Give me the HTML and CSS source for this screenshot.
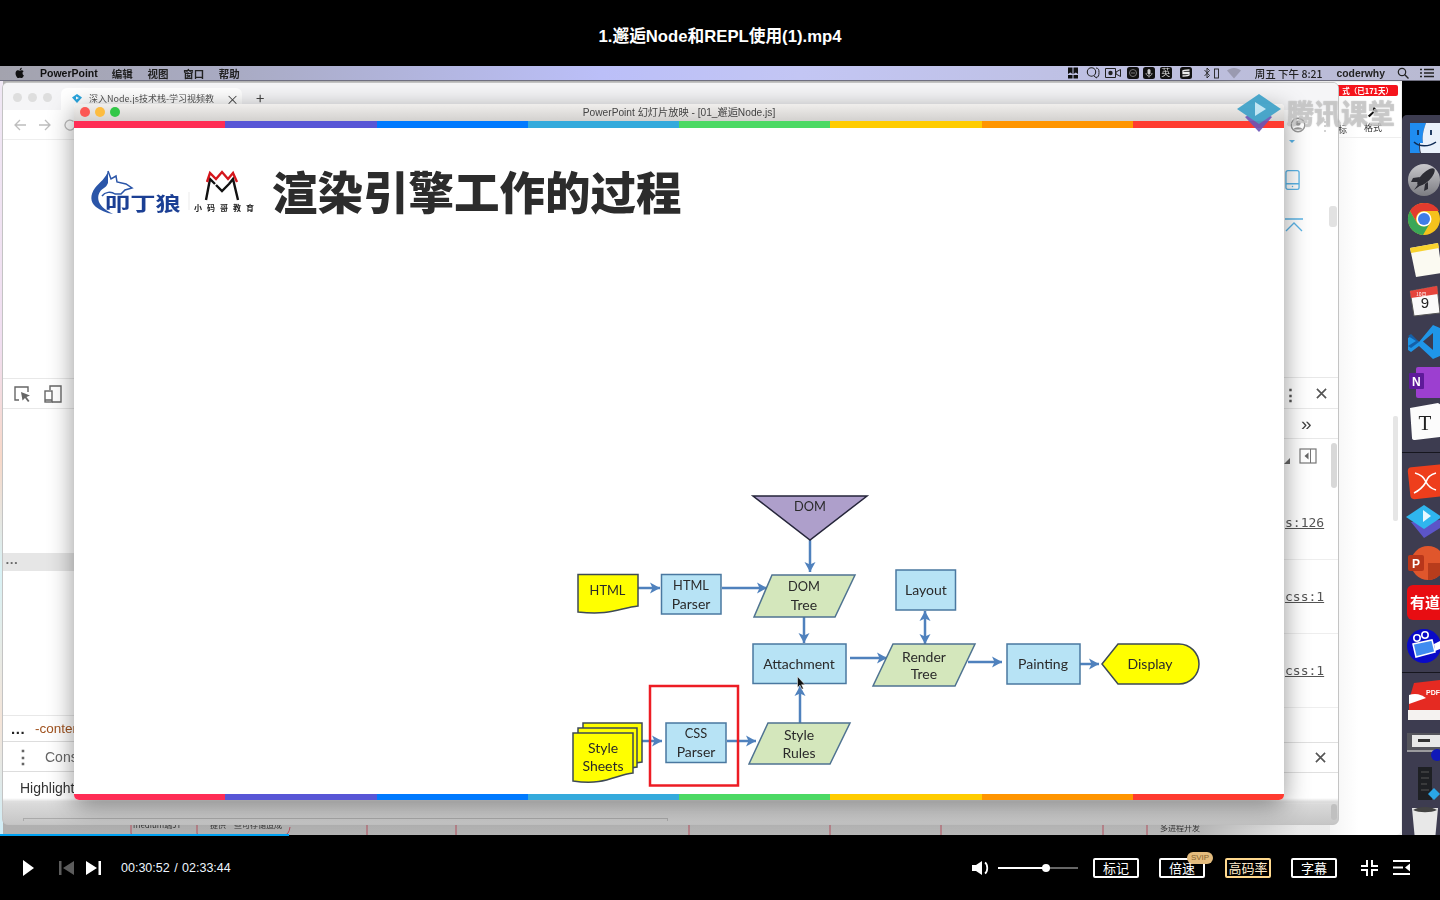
FILE: index.html
```html
<!DOCTYPE html>
<html lang="zh-CN">
<head>
<meta charset="utf-8">
<title>1.邂逅Node和REPL使用(1).mp4</title>
<link rel="stylesheet" href="styles.css">
</head>
<body>
<div class="player">
  <header class="video-title">1.邂逅Node和REPL使用(1).mp4</header>

  <main class="screen">
    <nav class="menubar">
      <svg class="apple" viewBox="0 0 24 24"><path d="M17.05 12.54c-.03-2.6 2.12-3.85 2.22-3.91-1.21-1.77-3.09-2.01-3.76-2.04-1.6-.16-3.12.94-3.94.94-.81 0-2.07-.92-3.4-.89-1.75.03-3.36 1.02-4.26 2.58-1.82 3.15-.46 7.82 1.3 10.38.87 1.25 1.9 2.65 3.25 2.6 1.31-.05 1.8-.84 3.38-.84 1.57 0 2.02.84 3.4.82 1.4-.03 2.29-1.27 3.15-2.53.99-1.45 1.4-2.86 1.42-2.93-.03-.01-2.73-1.05-2.76-4.18zM14.47 4.9c.72-.87 1.2-2.08 1.07-3.28-1.03.04-2.28.69-3.02 1.55-.66.77-1.24 2-1.09 3.18 1.15.09 2.32-.58 3.04-1.45z"/></svg>
      <span class="menu-app">PowerPoint</span>
      <span class="menu-item">编辑</span>
      <span class="menu-item">视图</span>
      <span class="menu-item">窗口</span>
      <span class="menu-item">帮助</span>
      <div class="status">
        <svg class="st st-mark" viewBox="0 0 12 12"><path d="M1 .5h4.500v6.500L3.300 5.500 1 7zM6.500 .5H11V7L8.800 5.500 6.500 7zM1 8h4.500v3.500H1zM6.500 8H11v3.500H6.500z" fill="#111"/></svg>
        <svg class="st st-q" viewBox="0 0 14 12"><circle cx="5.500" cy="5" r="4.200" fill="none" stroke="#222" stroke-width="1.100"/><path d="M8 9l2.500 2M10 1c2.500 0 3 1.800 3 4.500s-.5 5-3 5" fill="none" stroke="#222" stroke-width="1"/></svg>
        <svg class="st st-cam" viewBox="0 0 16 12"><path d="M.5 1.500h10v9H.5zM11 5l4.500-2.500v7L11 7z" fill="none" stroke="#222" stroke-width="1"/><circle cx="5.500" cy="6" r="2.200" fill="#222"/></svg>
        <svg class="st st-dark" viewBox="0 0 12 12"><rect width="12" height="12" rx="2.500" fill="#111"/><circle cx="6" cy="6" r="3.500" fill="none" stroke="#777"/><path d="M4 6h4" stroke="#777"/></svg>
        <svg class="st st-mic" viewBox="0 0 12 12"><rect width="12" height="12" rx="2.500" fill="#111"/><rect x="4.500" y="2" width="3" height="5.500" rx="1.500" fill="#ccc"/><path d="M3 6c0 4 6 4 6 0M6 9v1.500" fill="none" stroke="#ccc" stroke-width=".8"/></svg>
        <span class="st-ime">英</span>
        <svg class="st st-s" viewBox="0 0 12 12"><rect width="12" height="12" rx="2.500" fill="#111"/><path d="M2.500 4.500C3 3 9.500 3 9.500 3M9.500 7.500C9 9 2.500 9 2.500 9M3 5.500h6v1H3z" fill="none" stroke="#eee" stroke-width="1.300"/></svg>
        <svg class="st st-bt" viewBox="0 0 18 12"><path d="M1.500 3l5 5.500L4 11V1l2.500 2.500-5 5.500" fill="none" stroke="#222" stroke-width=".9"/><rect x="11.500" y="2" width="4" height="9" fill="none" stroke="#222" stroke-width=".9"/></svg>
        <svg class="st st-wifi" viewBox="0 0 14 12"><path d="M0 3.500C4 0 10 0 14 3.500L7 11.500z" fill="#9a9ab0"/></svg>
        <span class="st-clock">周五 下午 8:21</span>
        <span class="st-user">coderwhy</span>
        <svg class="st st-search" viewBox="0 0 12 12"><circle cx="5" cy="5" r="3.700" fill="none" stroke="#222" stroke-width="1.200"/><path d="M7.800 7.800L11.500 11.500" stroke="#222" stroke-width="1.300"/></svg>
        <svg class="st st-list" viewBox="0 0 14 12"><path d="M4 2.500h10M4 6h10M4 9.500h10" stroke="#222" stroke-width="1.300"/><path d="M0 2.500h2M0 6h2M0 9.500h2" stroke="#222" stroke-width="1.300"/></svg>
      </div>
    </nav>

    <div class="wallpaper"><span class="wall-strip"></span></div>

    <svg class="behind-strip" viewBox="0 0 1402 10">
      <path d="M131 0v8q0 2 2 2h62M197 0v8q0 2 2 2h85q5 0 6-8M367 0v10M456 0v10M689 0v10M830 0v10M941 0v10M1103 0v10M1147 0v10" fill="none" stroke="#b4505f"/>
      <text x="133" y="3" class="strip-text">medium端JT</text>
      <text x="210" y="3" class="strip-text">提供一些可存储造成</text>
      <text x="1160" y="6" class="strip-text">多进程开发</text>
    </svg>

    <aside class="backapp">
      <div class="trial-badge">式（已171天）</div>
      <div class="backapp-tool">
        <span class="cut-label">标</span>
        <div class="format-tool">
          <svg class="brush" viewBox="0 0 14 14"><path d="M8 1l5 5-3 1.500-3.500-3.500zM7 6l1.500 1.500L3 13l-2-1.500z" fill="#111"/></svg>
          <span>格式</span>
        </div>
      </div>
      <span class="backapp-scroll"></span>
    </aside>

    <section class="browser">
      <div class="tabstrip">
        <div class="lights-off"><i></i><i></i><i></i></div>
        <div class="tab">
          <svg class="favicon" viewBox="0 0 12 12"><path d="M1 4.500L6 1l5 3.500L6 10z" fill="#2aa6df"/><path d="M5 3.500l3 1.500-3 1.500z" fill="#fff"/></svg>
          <span class="tab-title">深入Node.js技术栈-学习视频教</span>
          <span class="tab-x">×</span>
        </div>
        <span class="tab-plus">+</span>
      </div>
      <div class="browser-body">
        <div class="pane pane-left">
          <div class="row nav-row">
            <svg class="nav-ic" viewBox="0 0 14 14"><path d="M13 7H2M7 2L2 7l5 5" fill="none" stroke="#bdbdbd" stroke-width="1.300"/></svg>
            <svg class="nav-ic" viewBox="0 0 14 14"><path d="M1 7h11M7 2l5 5-5 5" fill="none" stroke="#bdbdbd" stroke-width="1.300"/></svg>
            <svg class="nav-ic" viewBox="0 0 14 14"><path d="M12 7a5 5 0 1 1-1.500-3.500" fill="none" stroke="#bdbdbd" stroke-width="1.300"/></svg>
          </div>
          <div class="fill"></div>
          <div class="row tool-row">
            <svg class="tool-ic" viewBox="0 0 18 18"><path d="M6 15H2V2h13v5" fill="none" stroke="#666" stroke-width="1.400"/><path d="M8 7l9 3.500-3.500 1.500 3 4-1.500 1-3-4-2.500 2.500z" fill="#666"/></svg>
            <svg class="tool-ic" viewBox="0 0 18 18"><path d="M6 5V1h11v16H8" fill="none" stroke="#666" stroke-width="1.400"/><rect x="1" y="6" width="7" height="11" fill="none" stroke="#666" stroke-width="1.400"/><path d="M1 15h7" stroke="#666" stroke-width="1.400"/></svg>
          </div>
          <div class="blank-145"></div>
          <div class="row dots-band">•••</div>
          <div class="blank-144"></div>
          <div class="row css-row"><b>...</b><span class="css-prop">-content</span></div>
          <div class="row console-row"><span class="vdots">⋮</span><span>Console</span></div>
          <div class="row highlight-row">Highlight</div>
        </div>

        <div class="pane pane-right">
          <div class="row nav-row-r">
            <svg class="avatar" viewBox="0 0 16 16"><circle cx="8" cy="8" r="6.800" fill="none" stroke="#999" stroke-width="1.400"/><circle cx="8" cy="6.300" r="2.500" fill="#999"/><path d="M3.500 12.500c1-3 8-3 9 0" fill="#999"/></svg>
            <span class="kebab-faint">⋮</span>
          </div>
          <div class="fill right-icons">
            <span class="mini-arrow"></span>
            <svg class="tablet" viewBox="0 0 16 22"><rect x="1" y="1" width="14" height="20" rx="2" fill="none" stroke="#5bb5e8" stroke-width="1.400"/><path d="M1 15h14" stroke="#5bb5e8" stroke-width="1.400"/><circle cx="8" cy="18" r=".8" fill="#5bb5e8"/></svg>
            <svg class="up-top" viewBox="0 0 18 14"><path d="M0 1h18M1 13l8-8 8 8" fill="none" stroke="#5bb5e8" stroke-width="1.300"/></svg>
            <span class="scroll-a"></span>
          </div>
          <div class="row tool-row-r">
            <span class="kebab">⋮</span>
            <svg class="close" viewBox="0 0 12 12"><path d="M1 1l10 10M11 1L1 11" stroke="#555" stroke-width="1.800"/></svg>
          </div>
          <div class="row more-row"><span class="more">»</span></div>
          <div class="row panel-row">
            <span class="corner"></span>
            <svg class="panel-ic" viewBox="0 0 18 16"><rect x="1" y="1" width="16" height="14" fill="none" stroke="#777" stroke-width="1.200"/><path d="M11.500 1v14" stroke="#777"/><path d="M9.500 4.500v7L5.500 8z" fill="#666"/></svg>
            <span class="scroll-b"></span>
          </div>
          <div class="row src-row first-src"><u>s:126</u></div>
          <div class="row src-row"><u>css:1</u></div>
          <div class="row src-row"><u>css:1</u></div>
          <div class="blank-34"></div>
          <div class="row close-row">
            <svg class="close" viewBox="0 0 12 12"><path d="M1 1l10 10M11 1L1 11" stroke="#555" stroke-width="1.800"/></svg>
          </div>
          <div class="row blank-row"></div>
          <span class="scroll-c"></span>
        </div>
      </div>
      <span class="h-track"></span>
    </section>

    <section class="slide-window">
      <div class="slide-titlebar">
        <div class="lights"><i class="l-red"></i><i class="l-yellow"></i><i class="l-green"></i></div>
        <span class="slide-name">PowerPoint 幻灯片放映 - [01_邂逅Node.js]</span>
      </div>
      <div class="rainbow rainbow-top"><i class="c1"></i><i class="c2"></i><i class="c3"></i><i class="c4"></i><i class="c5"></i><i class="c6"></i><i class="c7"></i><i class="c8"></i></div>
      <div class="slide-body">
        <div class="slide-head">
          <svg class="logos" viewBox="90 168 165 48">
            <path d="M108 171c-2 7-8 11-13 17-5 7-5 14 1 19 4 3 10 6 17 7-6-3-12-7-14-12-2-6 0-11 5-14 2-1 3-3 4-5z" fill="#2a55a8"/>
            <path d="M108 171l3 8 5-3 1 6 9 2 6 4-7 2-4 4h-6c-4-3-10-2-13 2" fill="none" stroke="#2a55a8" stroke-width="1.500"/>
            <text x="0" y="0" class="logo-wolf" transform="translate(105 211) scale(1.330 1)">叩丁狼</text>
            <path d="M189 192v18" stroke="#ddd" stroke-width=".6"/>
            <path d="M206 200l4-21 5 5M216 185l6 6 7-7M229 184l4-5 5 21" fill="none" stroke="#111" stroke-width="2.400"/>
            <path d="M207 182l3-9 6 6 6-7 6 7 5-6 4 9" fill="none" stroke="#d5161c" stroke-width="2.400"/>
            <text x="194" y="211" class="logo-mini">小码哥教育</text>
          </svg>
          <h1 class="slide-title">渲染引擎工作的过程</h1>
        </div>

        <svg class="diagram" viewBox="74 128 1210 666">
          <defs>
            <marker id="ah" markerUnits="userSpaceOnUse" markerWidth="11" markerHeight="12" refX="10" refY="6" orient="auto-start-reverse">
              <path d="M0 .5L10 6 0 11.500 2.500 6z" fill="#4f81bd"/>
            </marker>
          </defs>
          <g class="arrows">
            <path d="M810 540V572" marker-end="url(#ah)"/>
            <path d="M638 588H660" marker-end="url(#ah)"/>
            <path d="M722 588H767" marker-end="url(#ah)"/>
            <path d="M804 617V643" marker-end="url(#ah)"/>
            <path d="M850 658H887" marker-end="url(#ah)"/>
            <path d="M925 611V644" marker-start="url(#ah)" marker-end="url(#ah)"/>
            <path d="M968 662H1002" marker-end="url(#ah)"/>
            <path d="M1080 664H1099" marker-end="url(#ah)"/>
            <path d="M642 741H662" marker-end="url(#ah)"/>
            <path d="M727 741H756" marker-end="url(#ah)"/>
            <path d="M800 723V686" marker-end="url(#ah)"/>
          </g>
          <path class="tri" d="M753 496H867L810 540z"/>
          <path class="doc" d="M578 574.500H638V606C620 608 610 616 578 612z"/>
          <rect class="box" x="661.500" y="574.500" width="59.500" height="39.500"/>
          <path class="para" d="M772 575H855L835 617H754z"/>
          <rect class="box" x="753" y="644" width="93" height="39.500"/>
          <rect class="box" x="896" y="570" width="59.500" height="40"/>
          <path class="para" d="M893 644H975L955 686H873z"/>
          <rect class="box" x="1007" y="644" width="73" height="40"/>
          <path class="doc" d="M1102 664L1118 644H1179A20 20 0 0 1 1179 684H1118z"/>
          <path class="doc" d="M583 723H642V762L628 764H583z"/>
          <path class="doc" d="M578 728H637V767L623 769H578z"/>
          <path class="doc" d="M573 733H633V773C615 775 605 786 573 781z"/>
          <rect class="box" x="666" y="723" width="60" height="39.500"/>
          <path class="para" d="M768 723H850L830 764H749z"/>
          <rect class="redmark" x="650" y="686" width="88" height="99.500"/>
          <g class="labels">
            <text x="810" y="506" class="caps">DOM</text>
            <text x="607.500" y="590" class="caps">HTML</text>
            <text x="691" y="585" class="caps">HTML</text><text x="691" y="603">Parser</text>
            <text x="804" y="586" class="caps">DOM</text><text x="804" y="604">Tree</text>
            <text x="799" y="663">Attachment</text>
            <text x="926" y="589">Layout</text>
            <text x="924" y="656">Render</text><text x="924" y="673">Tree</text>
            <text x="1043" y="663">Painting</text>
            <text x="1150" y="663">Display</text>
            <text x="603" y="747">Style</text><text x="603" y="765">Sheets</text>
            <text x="696" y="733" class="caps">CSS</text><text x="696" y="751">Parser</text>
            <text x="799" y="734">Style</text><text x="799" y="752">Rules</text>
          </g>
          <path d="M797.500 676.500v11l2.500-2.200 1.800 4 1.600-.8-1.800-3.800h3.400z" fill="#111" stroke="#fff" stroke-width=".5"/>
        </svg>
      </div>
      <div class="rainbow rainbow-bottom"><i class="c1"></i><i class="c2"></i><i class="c3"></i><i class="c4"></i><i class="c5"></i><i class="c6"></i><i class="c7"></i><i class="c8"></i></div>
    </section>

    <div class="watermark">
      <svg class="wm-icon" viewBox="0 0 44 38"><path d="M8 23l14 15 13-15-13-8z" fill="#6b55b8"/><path d="M0 15L22 0l22 15-22 15z" fill="#3aa0c8"/><path d="M18 8l11 7-11 7z" fill="#bfe6f5"/></svg>
      <span class="wm-text">腾讯课堂</span>
    </div>

    <aside class="dock">
      <svg class="dock-art" viewBox="1402 115 38 720">
        <defs>
          <linearGradient id="rocketbg" x1="0" y1="0" x2="0" y2="1"><stop offset="0" stop-color="#c8c8cc"/><stop offset="1" stop-color="#7c7c82"/></linearGradient>
        </defs>
        <path d="M1410 123h16c-3 8-4 14-3 20h-4c0 4 0 7 1 10h-10z" fill="#1f8cf0"/>
        <path d="M1426 123h14v30h-19c-1-3-1-6-1-10h3c-1-6 0-12 3-20z" fill="#e9f1fb"/>
        <path d="M1414 142c5 5 15 5 22 0" fill="none" stroke="#0d2b55" stroke-width="1.500"/>
        <path d="M1418 130v5M1431 130v5" stroke="#0d2b55" stroke-width="1.800"/>

        <circle cx="1424" cy="180" r="16" fill="url(#rocketbg)"/>
        <ellipse cx="1426" cy="177" rx="4.500" ry="11.500" transform="rotate(45 1426 177)" fill="#2c2c34"/>
        <path d="M1420 177l-7 1-2 4 7 0zM1425 184l-1 7 4-2 0-7zM1419 183l-5 7 7-5z" fill="#2c2c34"/>

        <circle cx="1424" cy="219" r="16" fill="#f6c21c"/>
        <path d="M1424 203a16 16 0 0 0-14 8l7 12a8 8 0 0 1 7-12h15a16 16 0 0 0-15-8z" fill="#e33b2e"/>
        <path d="M1410 211a16 16 0 0 0 13 24l7-12a8 8 0 0 1-13 0z" fill="#3aa757"/>
        <circle cx="1424" cy="219" r="7.500" fill="#fff"/><circle cx="1424" cy="219" r="6" fill="#3f7de8"/>

        <path d="M1410 248l28-5 4 30-26 4z" fill="#fbfaf2"/>
        <path d="M1410 248l28-5 1 5-28 5z" fill="#f8d22e"/>

        <path d="M1410 291l27-5 3 27-26 3z" fill="#fafafa" stroke="#555"/>
        <path d="M1410 291l27-5 1 8-27 4z" fill="#e5443c"/>
        <text x="1425" y="308" class="dock-nine">9</text>
        <text x="1416" y="296" class="dock-cal">10月</text>

        <path d="M1433 325l7 3v28l-7 3-14-13-8 6-3-2v-12l3-2 8 6z" fill="#1f96e8"/>
        <path d="M1419 342l-8 6-3-2 8-5-8-5 3-2z" fill="#1560a8"/>
        <path d="M1433 333v17l-10-8.500z" fill="#3c3b4f"/>

        <rect x="1416" y="367" width="26" height="31" rx="2" fill="#9c3fd0"/>
        <rect x="1409" y="373" width="15" height="16" rx="1" fill="#5e1a9a"/>
        <text x="1412" y="386" class="dock-letter">N</text>

        <path d="M1410 408l28-5 3 2v32l-26 3q-3 0-3-2z" fill="#fcfcfc"/>
        <text x="1425" y="430" class="dock-t">T</text>

        <path d="M1402 452.500h38" stroke="#16161e"/>

        <rect x="1409" y="466" width="36" height="32" rx="4" fill="#ee3e1c" transform="rotate(-6 1425 482)"/>
        <path d="M1415 473q8 2 11 9-4 7-12 11M1436 473q-8 2-10 9 3 6 10 8" fill="none" stroke="#fff" stroke-width="1.600"/>

        <path d="M1411 522l13 16 16-10v-8z" fill="#5c55c8"/>
        <path d="M1406 517l18-12 18 12-18 12z" fill="#2fb6ee"/>
        <path d="M1423 510l8 6-8 6z" fill="#e8f8ff"/>

        <circle cx="1428" cy="563" r="17" fill="#e0562c"/>
        <path d="M1428 563h17a17 17 0 0 1-17 17z" fill="#b83c1c"/>
        <rect x="1408" y="555" width="16" height="16" rx="2" fill="#b8361a"/>
        <text x="1412" y="568" class="dock-letter">P</text>

        <rect x="1407" y="585" width="40" height="35" rx="6" fill="#e80d12"/>
        <text x="1410" y="608" class="dock-yd">有道</text>

        <circle cx="1424" cy="646" r="17" fill="#0a0ac8"/>
        <circle cx="1417" cy="638" r="3.200" fill="none" stroke="#fff" stroke-width="1.600"/>
        <circle cx="1425" cy="635" r="3.200" fill="none" stroke="#fff" stroke-width="1.600"/>
        <path d="M1413 644l19-4 3 12-19 5z" fill="#3f8cf0" stroke="#fff" stroke-width="1.500"/>
        <path d="M1434 644l6-3v8l-5 2z" fill="#fff"/>

        <path d="M1402 672.500h38" stroke="#16161e"/>

        <path d="M1409 700l5-17 26-3v30h-31z" fill="#e52a22"/>
        <path d="M1409 695a14 11 0 0 1 17 3l-17 6z" fill="#fff"/>
        <rect x="1408" y="710" width="32" height="10" fill="#f4f2f0"/>
        <text x="1426" y="695" class="dock-pdf">PDF</text>

        <rect x="1407" y="733" width="33" height="17" fill="#55555c"/>
        <rect x="1412" y="735" width="28" height="12" fill="#e8e8e8"/>
        <rect x="1418" y="739" width="12" height="3" fill="#333"/>
        <rect x="1407" y="750" width="33" height="2" fill="#9a9a9e"/>
        <circle cx="1437" cy="755" r="6" fill="#1018b8"/>

        <rect x="1418" y="767" width="14" height="33" fill="#1e2024"/>
        <path d="M1421 772h8M1421 778h8M1421 784h6M1421 790h8" stroke="#555"/>
        <path d="M1434 788l6 6-6 6-6-6z" fill="#2aa6e8"/>

        <path d="M1412 808h26l-2.500 27h-21z" fill="#e8e8e8"/>
        <path d="M1413 810c6-4 18-4 24 0-6 3-18 3-24 0z" fill="#444"/>
      </svg>
    </aside>
  </main>

  <footer class="controls">
    <span class="progress"></span>
    <svg class="ic-play" viewBox="0 0 11 16"><path d="M0 0l11 8-11 8z" fill="#fff"/></svg>
    <svg class="ic-prev" viewBox="0 0 15 14"><path d="M0 0h2.500v14H0zM15 0v14L4 7z" fill="#5c5c5c"/></svg>
    <svg class="ic-next" viewBox="0 0 15 14"><path d="M0 0l11 7-11 7zM12.500 0H15v14h-2.500z" fill="#fff"/></svg>
    <span class="time">00:30:52 / 02:33:44</span>
    <div class="ctl-right">
      <svg class="ic-vol" viewBox="0 0 19 14"><path d="M0 4h4l6-4v14l-6-4H0z" fill="#fff"/><path d="M13 1.500c3 2 3 9 0 11" fill="none" stroke="#fff" stroke-width="1.800"/></svg>
      <div class="volume"><span class="vol-fill"></span><span class="vol-knob"></span></div>
      <button class="btn">标记</button>
      <button class="btn btn-speed">倍速<span class="svip">SVIP</span></button>
      <button class="btn btn-gold">高码率</button>
      <button class="btn">字幕</button>
      <svg class="ic-exit" viewBox="0 0 17 16"><path d="M6 0v6H0M11 0v6h6M6 16v-6H0M11 16v-6h6" fill="none" stroke="#fff" stroke-width="2"/></svg>
      <svg class="ic-list" viewBox="0 0 17 15"><path d="M0 1h17M0 14h17M0 7.500h10" stroke="#fff" stroke-width="2"/><path d="M17 3.500v8l-5-4z" fill="#fff"/></svg>
    </div>
  </footer>
</div>
</body>
</html>
```

FILE: styles.css
```css
* { box-sizing: border-box; }
html, body { margin: 0; padding: 0; background: #000; }
body { font-family: "Noto Sans CJK SC", "Liberation Sans", sans-serif; }
i { display: block; font-style: normal; }

.player { width: 1440px; height: 900px; display: flex; flex-direction: column; overflow: hidden; }

.video-title {
  height: 66px; flex: none; padding-top: 3px;
  display: flex; align-items: center; justify-content: center;
  color: #fff; font-size: 16.700px; font-weight: 700;
  font-family: "Liberation Sans", "Noto Sans CJK SC", sans-serif;
}

.screen { position: relative; height: 769px; flex: none; background: #000; overflow: hidden; filter: blur(.35px); }

/* menu bar */
.menubar {
  position: relative; z-index: 5; height: 15px; display: flex; align-items: center;
  background: linear-gradient(90deg, #a3a3ae 0, #a9abc4 240px, #bbbff8 600px, #c3c6f4 800px, #bec0e2 1100px, #b9bad2 1440px);
  border-bottom: 1px solid #6f6f80; padding-left: 14px; color: #111; font-size: 10px; line-height: 13px;
}
.apple { width: 12px; height: 12px; fill: #111; }
.menu-app { margin-left: 14px; font-weight: 700; font-family: "Liberation Sans", sans-serif; font-size: 10.500px; margin-right: 14px; }
.menu-item { margin-right: 14.700px; font-weight: 700; font-size: 10.500px; color: #222; }
.status { margin-left: auto; display: flex; align-items: center; padding-right: 6px; }
.st { height: 12px; display: block; flex: none; }
.st-mark { width: 12px; }
.st-q { width: 14px; margin-left: 7px; }
.st-cam { width: 16px; margin-left: 5px; }
.st-dark { width: 12px; margin-left: 6px; }
.st-mic { width: 12px; margin-left: 4px; }
.st-ime { width: 12px; height: 12px; margin-left: 5px; background: #111; color: #ddd; border-radius: 2px; font-size: 9px; line-height: 12px; text-align: center; }
.st-s { width: 12px; margin-left: 8px; }
.st-bt { width: 18px; margin-left: 11px; }
.st-wifi { width: 14px; margin-left: 6px; }
.st-clock { margin-left: 14px; font-size: 10.500px; color: #222; white-space: nowrap; font-weight: 500; }
.st-user { margin-left: 14px; font-size: 10.400px; font-weight: 700; color: #222; font-family: "Liberation Sans", sans-serif; }
.st-search { width: 12px; margin-left: 12px; }
.st-list { width: 14px; margin-left: 11px; }

/* backdrop */
.wallpaper { position: absolute; left: 0; top: 15px; width: 1402px; bottom: 0; background: linear-gradient(90deg, #b0b0b0 0, #b8b8b8 1200px, #e8e8e8 1300px, #f0f0f0 1402px); }
.wall-strip { display: block; width: 3px; height: 100%; background: linear-gradient(#efe7f4 0, #f0def0 35%, #f7d8c8 50%, #d8f2f6 65%, #f4e4d8 85%, #cfeef8 100%); }
.behind-strip { position: absolute; left: 0; bottom: 0; width: 1402px; height: 10px; }
.strip-text { font-size: 8px; fill: #333; }

/* office app behind the browser */
.backapp { position: absolute; left: 1330px; top: 16px; width: 71px; height: 753px; background: linear-gradient(90deg, #f4f4f4, #fff 40%); border-radius: 0 5px 5px 0; display: flex; flex-direction: column; align-items: flex-end; }
.trial-badge { margin: 3px 3px 0 0; width: 68px; height: 11px; background: #f5141c; border-radius: 2px; color: #fff; font-size: 7.500px; font-weight: 700; line-height: 11px; text-align: right; padding-right: 5px; white-space: nowrap; }
.backapp-tool { width: 62px; height: 42px; padding-top: 10px; border-bottom: 1px solid #eee; font-size: 9px; line-height: 10px; color: #333; position: relative; display: flex; justify-content: flex-end; padding-right: 19px; }
.cut-label { position: absolute; left: -1px; top: 29px; }
.format-tool { display: flex; flex-direction: column; align-items: center; gap: 5px; }
.brush { width: 12px; height: 12px; }
.backapp-scroll { position: absolute; right: 3px; top: 334px; width: 5px; height: 105px; background: #e6e6e6; border-radius: 2px; }

/* browser */
.browser { position: absolute; left: 2px; top: 16px; width: 1337px; height: 743px; background: linear-gradient(#fff 0, #fff 96.500%, #dcdcdc 97%, #c6c6c6 100%); border: 1px solid #c4c4c4; border-radius: 6px; display: flex; flex-direction: column; overflow: hidden; }
.tabstrip { height: 27px; flex: none; background: #f5f5f7; display: flex; padding-left: 10px; }
.lights-off { display: flex; gap: 6px; padding-top: 10px; width: 48px; }
.lights-off i { width: 9px; height: 9px; border-radius: 50%; background: #dedede; }
.tab { width: 181px; height: 27px; margin-top: 5px; background: #fff; border-radius: 6px 6px 0 0; display: flex; align-items: center; padding: 0 6px 6px 10px; }
.favicon { width: 12px; height: 12px; flex: none; }
.tab-title { margin-left: 6px; font-size: 9px; color: #555; white-space: nowrap; overflow: hidden; width: 128px; flex: none; }
.tab-x { margin-left: 9px; font-size: 13px; color: #444; line-height: 1; }
.tab-plus { margin: 5px 0 0 14px; font-size: 15px; color: #444; line-height: 20px; }

.browser-body { flex: 1; display: flex; justify-content: space-between; min-height: 0; }
.pane { display: flex; flex-direction: column; position: relative; }
.pane-left { width: 76px; }
.pane-right { width: 54px; }
.row { display: flex; align-items: center; flex: none; }
.fill { flex: none; height: 238px; position: relative; }
.h-track { position: absolute; left: 20px; bottom: 3px; width: 645px; height: 3px; border: 1px solid #aaa; border-bottom: 0; }

.nav-row { height: 30px; border-bottom: 1px solid #eee; padding-left: 10px; gap: 11px; }
.nav-ic { width: 14px; height: 14px; flex: none; }
.tool-row { height: 31px; border-top: 1px solid #e8e8e8; border-bottom: 1px solid #e8e8e8; padding-left: 10px; gap: 13px; }
.tool-ic { width: 18px; height: 18px; }
.blank-145 { height: 144px; }
.blank-144 { height: 144px; }
.dots-band { height: 18px; background: #e6e6e6; color: #666; font-size: 8px; letter-spacing: 1.500px; padding-left: 3px; font-family: "Liberation Sans", sans-serif; }
.css-row { height: 26px; border-top: 1px solid #e8e8e8; font-family: "Liberation Sans", sans-serif; font-size: 15px; color: #222; }
.css-row b { margin-left: 8px; width: 24px; flex: none; letter-spacing: .6px; }
.css-prop { color: #a0521e; white-space: nowrap; font-size: 13.500px; font-family: "Liberation Sans", sans-serif; }
.console-row { height: 31px; border-top: 1px solid #ddd; border-bottom: 1px solid #ddd; color: #666; font-family: "Liberation Sans", sans-serif; font-size: 14px; white-space: nowrap; }
.vdots { width: 42px; flex: none; padding-left: 11px; font-size: 18px; color: #666; font-weight: 700; }
.highlight-row { height: 31px; padding: 2px 0 0 17px; font-family: "Liberation Sans", sans-serif; font-size: 14px; color: #333; border-bottom: 1px solid #ddd; white-space: nowrap; }

.nav-row-r { height: 30px; padding-left: 6px; gap: 13px; }
.avatar { width: 16px; height: 16px; }
.kebab-faint { color: #bbb; font-size: 12px; line-height: 1; }
.right-icons { border-bottom: 1px solid #e8e8e8; }
.mini-arrow { position: absolute; left: 5px; top: 0; border: 3px solid transparent; border-top-color: #5bb5e8; }
.tablet { position: absolute; left: 1px; top: 29px; width: 15px; height: 22px; }
.up-top { position: absolute; left: 1px; top: 78px; width: 18px; height: 14px; }
.scroll-a { position: absolute; right: 1px; top: 66px; width: 8px; height: 21px; background: #e2e2e2; border-radius: 3px; }
.tool-row-r { height: 31px; border-bottom: 1px solid #e8e8e8; }
.kebab { width: 36px; flex: none; margin-left: -4px; padding-left: 2px; color: #555; font-size: 17px; font-weight: 700; }
.close { width: 11px; height: 11px; flex: none; }
.more-row { height: 30px; border-bottom: 1px solid #e8e8e8; padding-left: 17px; }
.more { font-size: 19px; color: #444; line-height: 1; font-family: "Liberation Sans", sans-serif; }
.panel-row { height: 47px; position: relative; padding-left: 15px; align-items: flex-start; padding-top: 9px; }
.corner { position: absolute; left: 0; top: 19px; border: 3px solid transparent; border-right-color: #666; border-bottom-color: #666; }
.panel-ic { width: 18px; height: 16px; }
.scroll-b { position: absolute; right: 1px; top: 4px; width: 6px; height: 45px; background: #d8d8d8; border-radius: 3px; }
.src-row { height: 74px; border-bottom: 1px solid #eee; font-family: "DejaVu Sans Mono", monospace; font-size: 13px; color: #555; padding-left: 1px; }
.blank-34 { height: 34px; }
.close-row { height: 31px; border-top: 1px solid #e0e0e0; border-bottom: 1px solid #e0e0e0; padding-left: 31px; }
.blank-row { height: 31px; border-bottom: 1px solid #ddd; }
.scroll-c { position: absolute; right: 1px; bottom: 4px; width: 6px; height: 16px; background: #c0c0c0; border-radius: 3px; }

/* powerpoint slide window */
.slide-window { position: absolute; left: 74px; top: 38px; width: 1210px; height: 696px; background: #fff; display: flex; flex-direction: column; box-shadow: 0 6px 26px rgba(0, 0, 0, .42); border-radius: 4px 4px 5px 5px; }
.slide-titlebar { height: 17px; flex: none; position: relative; display: flex; align-items: center; justify-content: center; padding-bottom: 2px; background: linear-gradient(#f0eeec, #d3d1cf); border-radius: 4px 4px 0 0; }
.lights { position: absolute; left: 6px; top: 3px; display: flex; gap: 5px; }
.lights i { width: 10px; height: 10px; border-radius: 50%; }
.l-red { background: #fc5753; }
.l-yellow { background: #fdbc40; }
.l-green { background: #33c748; }
.slide-name { font-size: 10.200px; color: #444; white-space: nowrap; font-family: "Liberation Sans", "Noto Sans CJK SC", sans-serif; }
.rainbow { display: flex; flex: none; }
.rainbow i { flex: 1; }
.rainbow-top { height: 7px; }
.rainbow-bottom { height: 6px; border-radius: 0 0 5px 5px; overflow: hidden; }
.c1 { background: #ff2d55; }
.c2 { background: #5856d6; }
.c3 { background: #007aff; }
.c4 { background: #34aadc; }
.c5 { background: #4cd964; }
.c6 { background: #ffcc00; }
.c7 { background: #ff9500; }
.c8 { background: #ff3b30; }

.slide-body { flex: 1; position: relative; min-height: 0; }
.slide-head { display: flex; align-items: flex-start; padding: 40px 0 0 16px; gap: 18px; }
.logos { width: 165px; height: 48px; flex: none; }
.logo-wolf { font-size: 19px; font-weight: 700; fill: #1b3f94; }
.logo-mini { font-size: 8px; font-weight: 700; fill: #222; letter-spacing: 5px; }
.slide-title { margin: -2px 0 0 -1px; font-size: 45.500px; line-height: 48px; font-weight: 900; color: #2c2c2c; white-space: nowrap; }

.diagram { position: absolute; left: 0; top: 0; width: 100%; height: 100%; pointer-events: none; }
.arrows path { fill: none; stroke: #4f81bd; stroke-width: 2.500; }
.tri { fill: #ae9fcb; stroke: #25253a; stroke-width: 1.500; }
.doc { fill: #ffff00; stroke: #3d4a55; stroke-width: 1.500; }
.box { fill: #b7e3f5; stroke: #4a78a0; stroke-width: 1.500; }
.para { fill: #d4e7bc; stroke: #4f7391; stroke-width: 1.500; }
.redmark { fill: none; stroke: #ed1c24; stroke-width: 2.500; }
.labels text { font-family: "Lato", "Liberation Sans", sans-serif; font-size: 14px; fill: #2a2a2a; text-anchor: middle; dominant-baseline: central; }
.labels .caps { font-size: 12.800px; }

.watermark { position: absolute; left: 1237px; top: 28px; display: flex; align-items: flex-start; gap: 6px; z-index: 4; }
.wm-icon { width: 44px; height: 38px; opacity: .9; }
.wm-text { font-size: 27px; font-weight: 900; line-height: 38px; color: rgba(216, 216, 216, .68); text-shadow: 0 0 1px rgba(90, 90, 90, .55); white-space: nowrap; }

/* dock */
.dock { position: absolute; right: 0; top: 49px; width: 38px; height: 720px; background: #3d3c50; border-radius: 5px 0 0 0; overflow: hidden; }
.dock-art { display: block; width: 38px; height: 720px; }
.dock-nine { font-family: "Liberation Sans", sans-serif; font-size: 15px; fill: #222; text-anchor: middle; }
.dock-cal { font-size: 5px; fill: #fff; }
.dock-letter { font-family: "Liberation Sans", sans-serif; font-size: 12px; font-weight: 700; fill: #fff; }
.dock-t { font-family: "Liberation Serif", serif; font-size: 21px; fill: #222; text-anchor: middle; }
.dock-yd { font-size: 15px; font-weight: 700; fill: #fff; }
.dock-pdf { font-family: "Liberation Sans", sans-serif; font-size: 7px; font-weight: 700; fill: #fff; }

/* controls */
.controls { height: 65px; flex: none; position: relative; display: flex; align-items: center; background: #000; padding-left: 23px; }
.progress { position: absolute; left: 0; top: -1px; width: 289px; height: 2px; background: #00a2f2; }
.ic-play { width: 11px; height: 16px; margin-right: 25px; }
.ic-prev { width: 15px; height: 14px; margin-right: 12px; }
.ic-next { width: 15px; height: 14px; margin-right: 20px; }
.time { color: #eef6ff; font-size: 12.500px; word-spacing: 1px; font-family: "Liberation Sans", sans-serif; white-space: nowrap; }
.ctl-right { margin-left: auto; padding-right: 30px; display: flex; align-items: center; }
.ic-vol { width: 19px; height: 14px; margin-right: 7px; }
.volume { width: 80px; height: 2px; background: #666; position: relative; margin-right: 15px; }
.vol-fill { position: absolute; left: 0; top: 0; width: 48px; height: 2px; background: #fff; }
.vol-knob { position: absolute; left: 44px; top: -3px; width: 8px; height: 8px; background: #fff; border-radius: 50%; }
.btn { width: 46px; height: 20px; margin-right: 20px; padding: 0; background: none; border: 2px solid #fff; border-radius: 2px; color: #fff; font-size: 13px; line-height: 15px; font-family: "Noto Sans CJK SC", sans-serif; position: relative; }
.btn-gold { border-color: #ffd98e; color: #ffeccb; }
.svip { position: absolute; left: 26px; top: -8px; width: 26px; height: 12px; background: #e3bb7d; border-radius: 6px; color: #85652f; font-size: 8px; line-height: 12px; font-family: "Liberation Sans", sans-serif; }
.ic-exit { width: 17px; height: 16px; margin: 0 15px 0 4px; }
.ic-list { width: 17px; height: 15px; }
```
